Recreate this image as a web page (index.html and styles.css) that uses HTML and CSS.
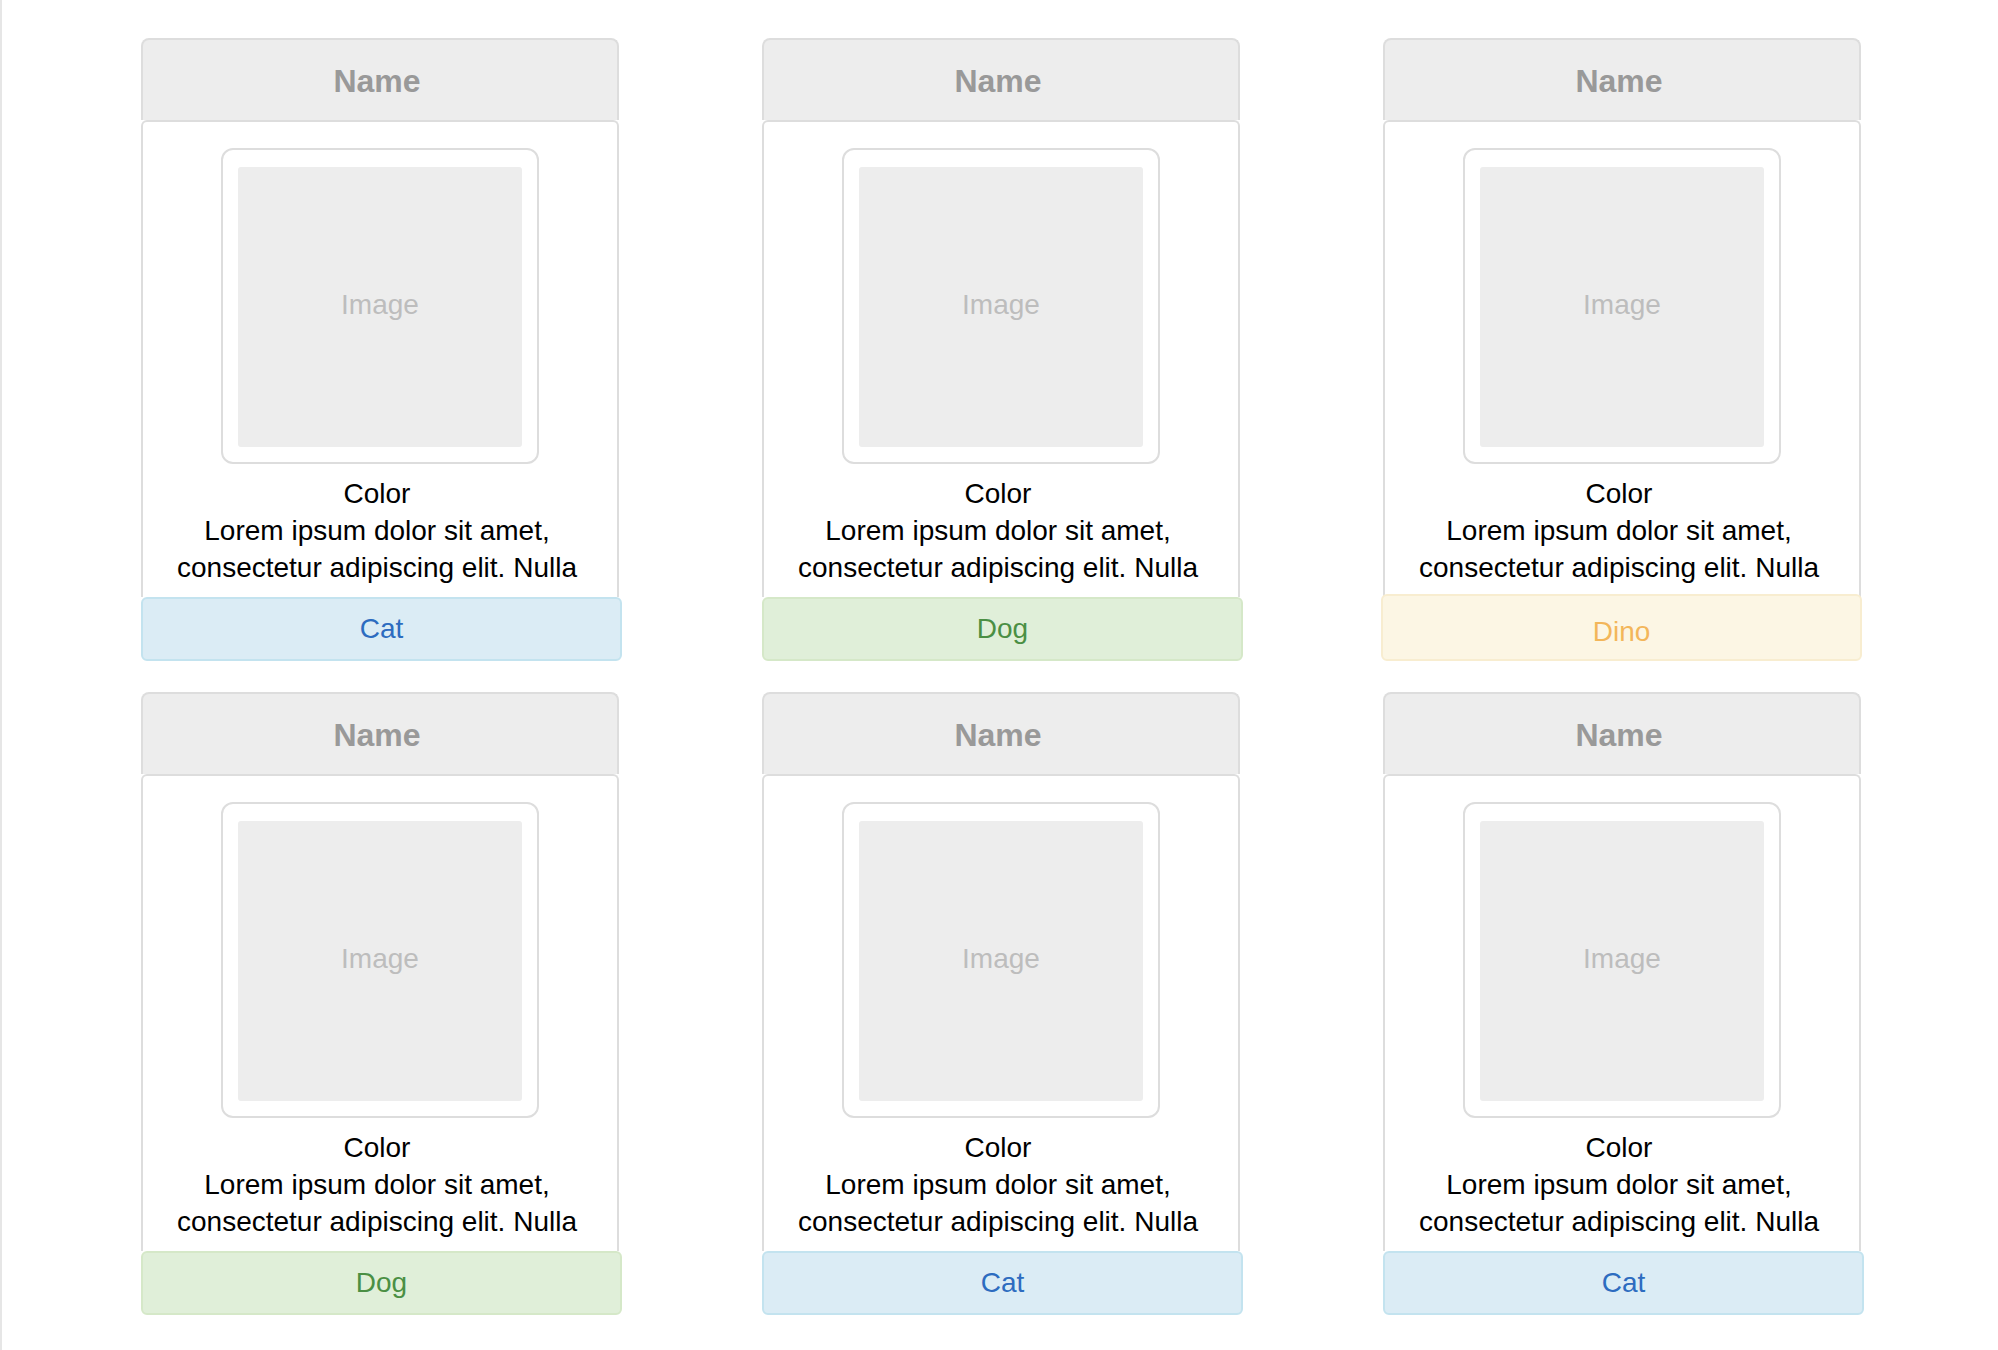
FILE: index.html
```html
<!DOCTYPE html>
<html lang="en">
<head>
<meta charset="utf-8">
<title>Cards</title>
<link rel="stylesheet" href="styles.css">
</head>
<body>
<main class="grid">
  <article class="card">
    <header class="card-head">Name</header>
    <div class="card-body">
      <div class="frame"><div class="img">Image</div></div>
      <p class="text">Color<br>Lorem ipsum dolor sit amet, consectetur adipiscing elit. Nulla</p>
    </div>
    <footer class="tag tag-info">Cat</footer>
  </article>
  <article class="card">
    <header class="card-head">Name</header>
    <div class="card-body">
      <div class="frame"><div class="img">Image</div></div>
      <p class="text">Color<br>Lorem ipsum dolor sit amet, consectetur adipiscing elit. Nulla</p>
    </div>
    <footer class="tag tag-success">Dog</footer>
  </article>
  <article class="card">
    <header class="card-head">Name</header>
    <div class="card-body">
      <div class="frame"><div class="img">Image</div></div>
      <p class="text">Color<br>Lorem ipsum dolor sit amet, consectetur adipiscing elit. Nulla</p>
    </div>
    <footer class="tag tag-warning">Dino</footer>
  </article>
  <article class="card">
    <header class="card-head">Name</header>
    <div class="card-body">
      <div class="frame"><div class="img">Image</div></div>
      <p class="text">Color<br>Lorem ipsum dolor sit amet, consectetur adipiscing elit. Nulla</p>
    </div>
    <footer class="tag tag-success">Dog</footer>
  </article>
  <article class="card">
    <header class="card-head">Name</header>
    <div class="card-body">
      <div class="frame"><div class="img">Image</div></div>
      <p class="text">Color<br>Lorem ipsum dolor sit amet, consectetur adipiscing elit. Nulla</p>
    </div>
    <footer class="tag tag-info">Cat</footer>
  </article>
  <article class="card">
    <header class="card-head">Name</header>
    <div class="card-body">
      <div class="frame"><div class="img">Image</div></div>
      <p class="text">Color<br>Lorem ipsum dolor sit amet, consectetur adipiscing elit. Nulla</p>
    </div>
    <footer class="tag tag-info">Cat</footer>
  </article>
</main>
</body>
</html>
```

FILE: styles.css
```css
* {
  box-sizing: border-box;
}

html, body {
  margin: 0;
  padding: 0;
  background: #ffffff;
}

body {
  font-family: "Liberation Sans", Arial, Helvetica, sans-serif;
  color: #000;
  min-height: 1350px;
  border-left: 2px solid #e6e6e6;
}

.grid {
  display: grid;
  grid-template-columns: repeat(3, 478px);
  column-gap: 143px;
  row-gap: 31px;
  padding: 38px 0 0 139px;
}

.card {
  display: flex;
  flex-direction: column;
  width: 478px;
}

.card-head {
  height: 82px;
  background: #ededed;
  border: 2px solid #dddddd;
  border-bottom: none;
  border-radius: 8px 8px 0 0;
  display: flex;
  align-items: center;
  justify-content: center;
  padding: 3px 6px 0 0;
  font-size: 32px;
  font-weight: bold;
  color: #999999;
}

.card-body {
  height: 477px;
  border: 2px solid #dddddd;
  border-bottom: none;
  border-radius: 6px 6px 0 0;
  padding-top: 26px;
  overflow: hidden;
  display: flex;
  flex-direction: column;
  align-items: center;
}

.frame {
  width: 318px;
  height: 316px;
  border: 2px solid #dddddd;
  border-radius: 12px;
  padding: 17px 15px 15px;
  background: #fff;
}

.img {
  width: 284px;
  height: 280px;
  background: #ededed;
  border-radius: 3px;
  display: flex;
  align-items: center;
  justify-content: center;
  padding-bottom: 5px;
  font-size: 28px;
  color: #bdbdbd;
}

.text {
  margin: 11px 0 0;
  padding-right: 6px;
  width: 100%;
  text-align: center;
  font-size: 28px;
  line-height: 37px;
}

.tag {
  height: 64px;
  margin-right: -3px;
  border: 2px solid;
  border-radius: 6px;
  display: flex;
  align-items: center;
  justify-content: center;
  font-size: 28px;
}

.tag-info {
  background: #dbecf5;
  border-color: #c3e3ef;
  color: #2d6cc0;
}

.tag-success {
  background: #e0efd9;
  border-color: #d5e8c8;
  color: #4b8f44;
}

.tag-warning {
  background: #fcf6e4;
  border-color: #f8edd0;
  color: #f3b65a;
  height: 67px;
  margin-top: -3px;
  margin-left: -2px;
  margin-right: -1px;
  padding-top: 9px;
}
```
